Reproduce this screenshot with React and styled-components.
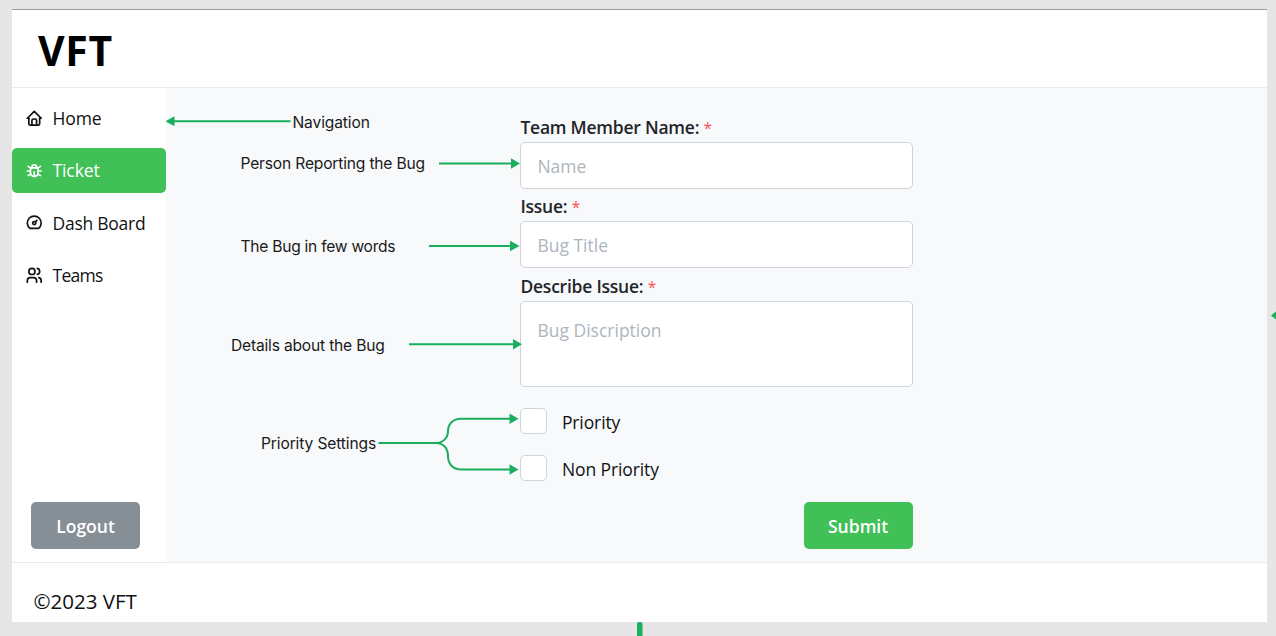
import React from "react";
import styled, { createGlobalStyle } from "styled-components";
import { TbHome, TbBug, TbDashboard, TbUsers } from "react-icons/tb";

const GlobalStyle = createGlobalStyle`
  *, *::before, *::after { box-sizing: border-box; }
  body { margin: 0; background: #e6e6e6; overflow: hidden; }
  button, input, textarea { font: inherit; letter-spacing: inherit; }
`;

const Canvas = styled.div`
  position: relative;
  height: 636px;
  padding: 9px 9px 14px 12px;
  overflow: hidden;
  color: #101113;
  font: 17.5px/24px "Segoe UI", "Open Sans", "Noto Sans", sans-serif;
`;

const Shell = styled.div`
  display: flex;
  flex-direction: column;
  height: 613px;
  background: #fff;
  border-top: 1px solid #9a9c9e;
`;

const Header = styled.header`
  display: flex;
  align-items: center;
  flex: 0 0 78px;
  padding: 3px 26px 0;
  border-bottom: 1px solid #e9ecef;
`;

const Brand = styled.h1`
  margin: 0;
  color: #000;
  font-size: 41px;
  line-height: 56px;
  font-weight: 700;
  letter-spacing: 0.7px;
`;

const Body = styled.div`
  display: flex;
  flex: 1;
`;

const Sidebar = styled.nav`
  display: flex;
  flex-direction: column;
  flex: 0 0 154px;
  padding: 8px 0 13px;
`;

const NavList = styled.div`
  display: flex;
  flex-direction: column;
  gap: 8px;
`;

const NavItem = styled.a`
  display: flex;
  align-items: center;
  gap: 9px;
  height: 44.3px;
  padding-left: 13px;
  border-radius: 5px;
  color: ${(p) => (p.$active ? "#fff" : "#101113")};
  background: ${(p) => (p.$active ? "#40c057" : "transparent")};
  letter-spacing: ${(p) => p.$spacing || "0"};
  white-space: nowrap;

  svg { width: 18.5px; height: 18.5px; flex: none; stroke-width: 2.2; }
`;

const Button = styled.button`
  width: 109px;
  height: 47px;
  padding: 1px 0 0;
  border: 0;
  border-radius: 5px;
  color: #fff;
  background: ${(p) => (p.$tone === "gray" ? "#868e96" : "#40c057")};
  font-weight: 600;
`;

const LogoutButton = styled(Button)`
  margin: auto 0 0 19px;
`;

const Main = styled.main`
  flex: 1;
  padding: 28px 0 13px 354.4px;
  background: #f8f9fb;
`;

const Form = styled.form`
  display: flex;
  flex-direction: column;
  width: 392.2px;
  height: 100%;
`;

const Field = styled.label`
  display: flex;
  flex-direction: column;
  margin-bottom: 6.4px;
`;

const Label = styled.span`
  height: 26px;
  line-height: 23px;
  color: #212529;
  font-weight: 600;
  letter-spacing: -0.23px;
  white-space: nowrap;
`;

const Required = styled.span`
  color: #fa5252;
  font-size: 15.5px;
  font-weight: 400;
`;

const Input = styled.input`
  height: 47px;
  padding: 0 16px;
  border: 1px solid #ced4da;
  border-radius: 5px;
  background: #fff;
  outline: 0;
  &::placeholder { color: #adb5bd; opacity: 1; }
`;

const Area = styled.textarea`
  height: 86px;
  padding: 16px;
  border: 1px solid #ced4da;
  border-radius: 5px;
  background: #fff;
  resize: none;
  outline: 0;
  &::placeholder { color: #adb5bd; opacity: 1; }
`;

const Options = styled.div`
  display: flex;
  flex-direction: column;
  gap: 21px;
  margin-top: 14.5px;
  letter-spacing: -0.1px;
`;

const Option = styled.label`
  display: flex;
  align-items: center;
  gap: 15px;
  height: 26px;
  span { padding-top: 2px; }
`;

const Checkbox = styled.input`
  appearance: none;
  width: 26.5px;
  height: 26px;
  margin: 0;
  border: 1px solid #ced4da;
  border-radius: 5px;
  background: #fff;
`;

const SubmitButton = styled(Button)`
  margin: auto 0 0 auto;
`;

const Footer = styled.footer`
  flex: 0 0 60px;
  padding: 24px 21.5px 0;
  border-top: 1px solid #e9ecef;
  font-size: 20.5px;
  line-height: 28px;
`;

const Arrows = styled.svg`
  position: absolute;
  inset: 0;
  pointer-events: none;
`;

const Note = styled.div`
  position: absolute;
  left: ${(p) => p.$x}px;
  top: ${(p) => p.$y}px;
  color: #1a1a1a;
  font: 400 15.6px/20px Inter, sans-serif;
  letter-spacing: ${(p) => p.$spacing}px;
  white-space: nowrap;
`;

const NAV = [
  { label: "Home", Icon: TbHome, spacing: "-0.1px" },
  { label: "Ticket", Icon: TbBug, active: true, spacing: "-0.1px" },
  { label: "Dash Board", Icon: TbDashboard, spacing: "-0.26px" },
  { label: "Teams", Icon: TbUsers, spacing: "-0.7px" },
];

const NOTES = [
  { text: "Navigation", x: 292.5, y: 112.5, spacing: -0.13 },
  { text: "Person Reporting the Bug", x: 240.5, y: 153.5, spacing: -0.18 },
  { text: "The Bug in few words", x: 240.5, y: 236.5, spacing: -0.26 },
  { text: "Details about the Bug", x: 231, y: 335.5, spacing: -0.19 },
  { text: "Priority Settings", x: 261, y: 433.5, spacing: -0.14 },
];

export default function App() {
  return (
    <Canvas>
      <GlobalStyle />
      <Shell>
        <Header><Brand>VFT</Brand></Header>
        <Body>
          <Sidebar>
            <NavList>
              {NAV.map(({ label, Icon, active, spacing }) => (
                <NavItem key={label} $active={active} $spacing={spacing}><Icon />{label}</NavItem>
              ))}
            </NavList>
            <LogoutButton type="button" $tone="gray">Logout</LogoutButton>
          </Sidebar>
          <Main>
            <Form>
              <Field>
                <Label>Team Member Name: <Required>*</Required></Label>
                <Input placeholder="Name" />
              </Field>
              <Field>
                <Label>Issue: <Required>*</Required></Label>
                <Input placeholder="Bug Title" />
              </Field>
              <Field>
                <Label>Describe Issue: <Required>*</Required></Label>
                <Area placeholder="Bug Discription" />
              </Field>
              <Options>
                <Option><Checkbox type="checkbox" /><span>Priority</span></Option>
                <Option><Checkbox type="checkbox" /><span>Non Priority</span></Option>
              </Options>
              <SubmitButton type="button">Submit</SubmitButton>
            </Form>
          </Main>
        </Body>
        <Footer>©2023 VFT</Footer>
      </Shell>

      <Arrows width="1276" height="636" viewBox="0 0 1276 636" fill="none">
        <g stroke="#1aae5f" strokeWidth="2">
          <path d="M290.500 121.300H173" />
          <path d="M439 163.500H512" />
          <path d="M429 246H511" />
          <path d="M409 344.300H514" />
          <path d="M378.500 443H436C443 443 448 438 448 431C448 424 453 418.700 461 418.700H511" />
          <path d="M436 443C443 443 448 448 448 456C448 464 453 469.500 461 469.500H511" />
        </g>
        <g fill="#1aae5f">
          <path d="M165.500 121.300L174.500 116.300V126.300Z" />
          <path d="M520 163.500L511 158.300V168.700Z" />
          <path d="M519.500 246L510 240.800V251.200Z" />
          <path d="M522 344.300L513 339.100V349.500Z" />
          <path d="M518.500 418.700L509.500 413.500V423.900Z" />
          <path d="M518.500 469.500L509.500 464.300V474.700Z" />
          <path d="M1271 315.500L1276 311.500V319.500Z" />
          <rect x="637" y="622" width="5.500" height="18" rx="2" />
        </g>
      </Arrows>
      {NOTES.map((n) => (
        <Note key={n.text} $x={n.x} $y={n.y} $spacing={n.spacing}>{n.text}</Note>
      ))}
    </Canvas>
  );
}
